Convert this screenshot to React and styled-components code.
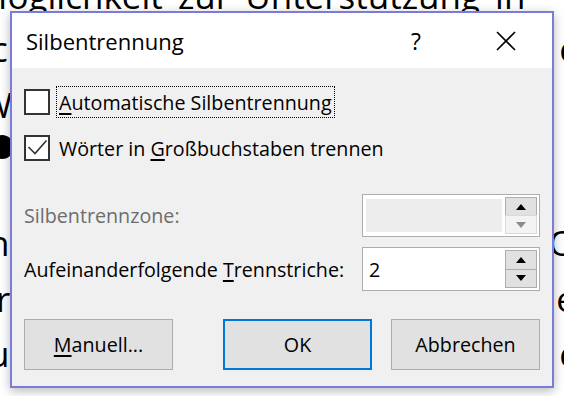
import React from 'react'
import styled, { createGlobalStyle } from 'styled-components'

const GlobalStyle = createGlobalStyle`
  html, body {
    margin: 0;
    padding: 0;
    background: #fff;
  }
  body {
    font-family: "Open Sans", "Noto Sans", sans-serif;
  }
`

const Page = styled.div`
  position: relative;
  width: 564px;
  height: 396px;
  overflow: hidden;
  background: #fff;
`

const Document = styled.div`
  font-family: "Open Sans", "Noto Sans", sans-serif;
  font-size: 35px;
  line-height: 56px;
  color: #000;
  margin-top: -32px;
`

const DocLine = styled.div`
  display: flex;
  justify-content: space-between;
  align-items: center;
  white-space: nowrap;
  height: 56px;
  margin: ${p => p.$top || 0}px -12px 0 ${p => p.$left ?? -10}px;
  word-spacing: ${p => p.$spacing || 0}px;
`

const Bullet = styled.span`
  display: inline-block;
  width: 24px;
  height: 24px;
  border-radius: 50%;
  background: #000;
  margin-left: 4px;
`

const Dialog = styled.div`
  position: absolute;
  left: 10px;
  top: 11px;
  width: 544px;
  height: 377px;
  box-sizing: border-box;
  border: 2px solid #7b7bd9;
  background: #f0f0f0;
  box-shadow: 0 3px 10px rgba(0, 0, 0, 0.28);
  display: flex;
  flex-direction: column;
  font-family: "Open Sans", "Noto Sans", sans-serif;
  color: #000;
`

const TitleBar = styled.div`
  height: 55px;
  background: #fff;
  display: flex;
  align-items: center;
  padding-left: 14px;
  padding-right: 1px;
`

const Title = styled.div`
  flex: 1;
  font-size: 22px;
`

const CaptionButton = styled.div`
  width: 90px;
  display: flex;
  justify-content: center;
  align-items: center;
  font-size: 23px;
`

const Body = styled.div`
  flex: 1;
  display: flex;
  flex-direction: column;
  padding: 18px 12px 0 12px;
  font-size: 19.7px;
`

const CheckRow = styled.div`
  display: flex;
  align-items: center;
  height: 32px;
  margin-top: ${p => p.$top || 0}px;
`

const Box = styled.div`
  width: 26px;
  height: 26px;
  box-sizing: border-box;
  border: 2px solid #333;
  background: #fff;
  display: flex;
  align-items: center;
  justify-content: center;
  margin-right: 6px;
`

const Label = styled.div`
  height: 32px;
  display: flex;
  align-items: center;
  padding: 0 2px;
  box-sizing: border-box;
  border: 1px dotted ${p => (p.$focus ? '#000' : 'transparent')};
`

const FieldRow = styled.div`
  display: flex;
  align-items: center;
  justify-content: space-between;
  margin-top: ${p => p.$top || 0}px;
`

const FieldLabel = styled.div`
  color: ${p => (p.$disabled ? '#6d6d6d' : '#000')};
`

const SpinBox = styled.div`
  width: 178px;
  height: ${p => p.$h}px;
  box-sizing: border-box;
  border: 1px solid #adadad;
  background: #fff;
  display: flex;
  padding: 2px 2px 2px 3px;
  gap: 3px;
`

const SpinField = styled.div`
  flex: 1;
  background: ${p => (p.$disabled ? '#ededed' : '#fff')};
  margin: ${p => (p.$disabled ? '2px 0' : '0')};
  display: flex;
  align-items: center;
  padding-left: 3px;
`

const SpinButtons = styled.div`
  width: 32px;
  display: flex;
  flex-direction: column;
`

const SpinButton = styled.div`
  flex: 1;
  box-sizing: border-box;
  border: 1px solid ${p => (p.$disabled ? '#d9d9d9' : '#adadad')};
  background: ${p => (p.$disabled ? '#f3f3f3' : '#e1e1e1')};
  display: flex;
  align-items: center;
  justify-content: center;
  & + & {
    margin-top: -1px;
  }
`

const Triangle = styled.span`
  width: 0;
  height: 0;
  border-left: 5px solid transparent;
  border-right: 5px solid transparent;
  ${p =>
    p.$down
      ? `border-top: 6px solid ${p.$disabled ? '#8a8a8a' : '#000'};`
      : `border-bottom: 6px solid ${p.$disabled ? '#8a8a8a' : '#000'};`}
`

const ButtonRow = styled.div`
  display: flex;
  margin-top: 28px;
  gap: 19px;
`

const Button = styled.div`
  width: 149px;
  height: 51px;
  box-sizing: border-box;
  border: ${p => (p.$primary ? '2px solid #0078d7' : '1px solid #adadad')};
  background: #e1e1e1;
  display: flex;
  align-items: center;
  justify-content: center;
  margin-right: ${p => (p.$push ? 'auto' : '0')};
`

const Key = styled.u`
  text-decoration-thickness: 2px;
  text-underline-offset: 3px;
`

const Spin = ({ value, disabled, height }) => (
  <SpinBox $h={height}>
    <SpinField $disabled={disabled}>{value}</SpinField>
    <SpinButtons>
      <SpinButton>
        <Triangle />
      </SpinButton>
      <SpinButton $disabled={disabled}>
        <Triangle $down $disabled={disabled} />
      </SpinButton>
    </SpinButtons>
  </SpinBox>
)

const App = () => {
  return (
    <Page>
      <GlobalStyle />
      <Document>
        <DocLine $left={-24} $spacing={6}>
          <span>Möglichkeit zur Unterstützung in</span>
        </DocLine>
        <DocLine $top={-3} $left={-9}>
          <span>c</span>
          <span>c</span>
        </DocLine>
        <DocLine $left={-20}>
          <span>W</span>
          <span>.</span>
        </DocLine>
        <DocLine $top={-14} $left={-14}>
          <Bullet />
          <span />
        </DocLine>
        <DocLine $top={40} $left={-12}>
          <span>n</span>
          <span>O</span>
        </DocLine>
        <DocLine $left={-4}>
          <span>r</span>
          <span>e</span>
        </DocLine>
        <DocLine $top={-1} $left={-12}>
          <span>u</span>
          <span>c</span>
        </DocLine>
      </Document>

      <Dialog>
        <TitleBar>
          <Title>Silbentrennung</Title>
          <CaptionButton>?</CaptionButton>
          <CaptionButton>
            <svg width="20" height="20" viewBox="0 0 20 20">
              <path d="M1 1 L19 19 M19 1 L1 19" stroke="#000" strokeWidth="1.6" fill="none" />
            </svg>
          </CaptionButton>
        </TitleBar>
        <Body>
          <CheckRow>
            <Box />
            <Label $focus>
              <span><Key>A</Key>utomatische Silbentrennung</span>
            </Label>
          </CheckRow>
          <CheckRow $top={14}>
            <Box>
              <svg width="22" height="22" viewBox="0 0 22 22">
                <path d="M2.5 10 L9 16.5 L20.5 3.5" stroke="#333" strokeWidth="1.6" fill="none" />
              </svg>
            </Box>
            <Label>
              <span>Wörter in <Key>G</Key>roßbuchstaben trennen</span>
            </Label>
          </CheckRow>
          <FieldRow $top={30}>
            <FieldLabel $disabled>Silbentrennzone:</FieldLabel>
            <Spin disabled height={43} />
          </FieldRow>
          <FieldRow $top={10}>
            <FieldLabel>Aufeinanderfolgende <Key>T</Key>rennstriche:</FieldLabel>
            <Spin value="2" height={44} />
          </FieldRow>
          <ButtonRow>
            <Button $push>
              <span><Key>M</Key>anuell...</span>
            </Button>
            <Button $primary>OK</Button>
            <Button>Abbrechen</Button>
          </ButtonRow>
        </Body>
      </Dialog>
    </Page>
  )
}

export default App
